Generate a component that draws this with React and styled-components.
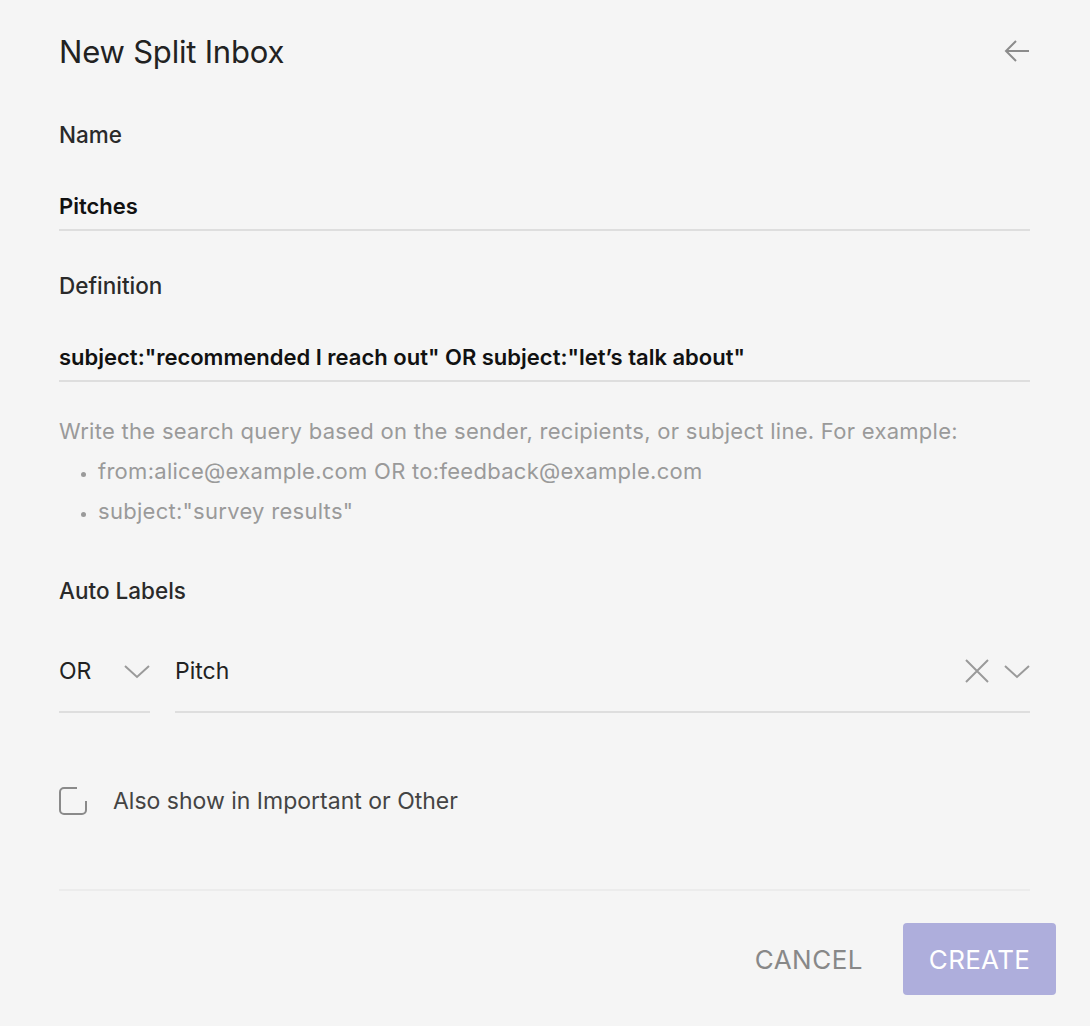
import React from 'react';
import styled, { createGlobalStyle } from 'styled-components';

const Global = createGlobalStyle`
  html, body { margin: 0; padding: 0; background: #f5f5f5; }
  body { font-family: Inter, "Noto Sans", sans-serif; -webkit-font-smoothing: antialiased; }
`;

const Dialog = styled.div`
  width: 1090px;
  height: 1026px;
  box-sizing: border-box;
  padding: 30px 60px 0 59px;
  display: flex;
  flex-direction: column;
  background: #f5f5f5;
`;

const Header = styled.div`
  display: flex;
  align-items: center;
  justify-content: space-between;
  height: 42px;
`;

const Title = styled.h1`
  margin: 0;
  font-size: 31px;
  font-weight: 400;
  color: #222;
  letter-spacing: -0.2px;
`;

const IconButton = styled.button`
  border: 0;
  background: none;
  padding: 0;
  display: flex;
  align-items: center;
  cursor: pointer;
`;

const Label = styled.div`
  font-size: 22.5px;
  font-weight: 500;
  color: #2a2a2a;
  margin-top: ${p => p.$top}px;
  line-height: 24px;
`;

const Field = styled.div`
  display: flex;
  align-items: center;
  height: 46px;
  margin-top: 36px;
  border-bottom: 2px solid #dedede;
  font-size: 22px;
  font-weight: 600;
  color: #111;
`;

const Help = styled.div`
  margin-top: 29px;
  font-size: 22px;
  letter-spacing: 0.28px;
  color: #9a9a9a;
  line-height: 40px;
`;

const HelpList = styled.ul`
  margin: 0;
  padding: 0 0 0 39px;
  li { line-height: 40px; }
  li::marker { font-size: 17px; }
`;

const LabelRow = styled.div`
  display: flex;
  gap: 25px;
  margin-top: 28px;
`;

const Select = styled.div`
  display: flex;
  align-items: center;
  justify-content: space-between;
  height: 82px;
  box-sizing: border-box;
  border-bottom: 2px solid #dedede;
  font-size: 23px;
  color: #222;
  width: ${p => p.$w ? `${p.$w}px` : 'auto'};
  flex: ${p => p.$w ? 'none' : 1};
`;

const Icons = styled.div`
  display: flex;
  align-items: center;
  gap: 14px;
`;

const CheckRow = styled.label`
  display: flex;
  align-items: center;
  gap: 26px;
  height: 28px;
  margin-top: 74px;
  font-size: 23px;
  color: #444;
`;

const Divider = styled.div`
  margin-top: 74px;
  border-top: 2px solid #ececec;
`;

const Footer = styled.div`
  display: flex;
  justify-content: flex-end;
  align-items: center;
  gap: 40px;
  margin-top: 32px;
  margin-right: -26px;
`;

const TextButton = styled.button`
  border: 0;
  background: none;
  font-family: inherit;
  font-size: 26px;
  color: #888;
  padding: 0;
  letter-spacing: 0.5px;
`;

const PrimaryButton = styled.button`
  border: 0;
  background: #aeaedc;
  color: #fff;
  font-family: inherit;
  font-size: 26px;
  width: 153px;
  height: 72px;
  border-radius: 4px;
  letter-spacing: 0.3px;
`;

const Chevron = () => (
  <svg width="26" height="16" viewBox="0 0 26 16" fill="none" stroke="#9a9a9a" strokeWidth="2">
    <path d="M1 3 L13 14 L25 3" />
  </svg>
);

const Checkbox = () => (
  <svg width="28" height="28" viewBox="0 0 28 28" fill="none" stroke="#8a8a8a" strokeWidth="2">
    <path d="M18 1 H5 A4 4 0 0 0 1 5 V23 A4 4 0 0 0 5 27 H23 A4 4 0 0 0 27 23 V14" />
  </svg>
);

export default function App() {
  return (
    <Dialog>
      <Global />
      <Header>
        <Title>New Split Inbox</Title>
        <IconButton aria-label="back">
          <svg width="26" height="22" viewBox="0 0 26 22" fill="none" stroke="#8c8c8c" strokeWidth="2">
            <path d="M25 11 H2 M12 1 L2 11 L12 21" />
          </svg>
        </IconButton>
      </Header>
      <Label $top={51}>Name</Label>
      <Field>Pitches</Field>
      <Label $top={43}>Definition</Label>
      <Field>subject:"recommended I reach out" OR subject:"let’s talk about"</Field>
      <Help>
        Write the search query based on the sender, recipients, or subject line. For example:
        <HelpList>
          <li>from:alice@example.com OR to:feedback@example.com</li>
          <li>subject:"survey results"</li>
        </HelpList>
      </Help>
      <Label $top={48}>Auto Labels</Label>
      <LabelRow>
        <Select $w={91}>OR <Chevron /></Select>
        <Select>
          Pitch
          <Icons>
            <svg width="26" height="26" viewBox="0 0 26 26" fill="none" stroke="#9a9a9a" strokeWidth="2">
              <path d="M2 2 L24 24 M24 2 L2 24" />
            </svg>
            <Chevron />
          </Icons>
        </Select>
      </LabelRow>
      <CheckRow>
        <Checkbox />
        Also show in Important or Other
      </CheckRow>
      <Divider />
      <Footer>
        <TextButton>CANCEL</TextButton>
        <PrimaryButton>CREATE</PrimaryButton>
      </Footer>
    </Dialog>
  );
}
